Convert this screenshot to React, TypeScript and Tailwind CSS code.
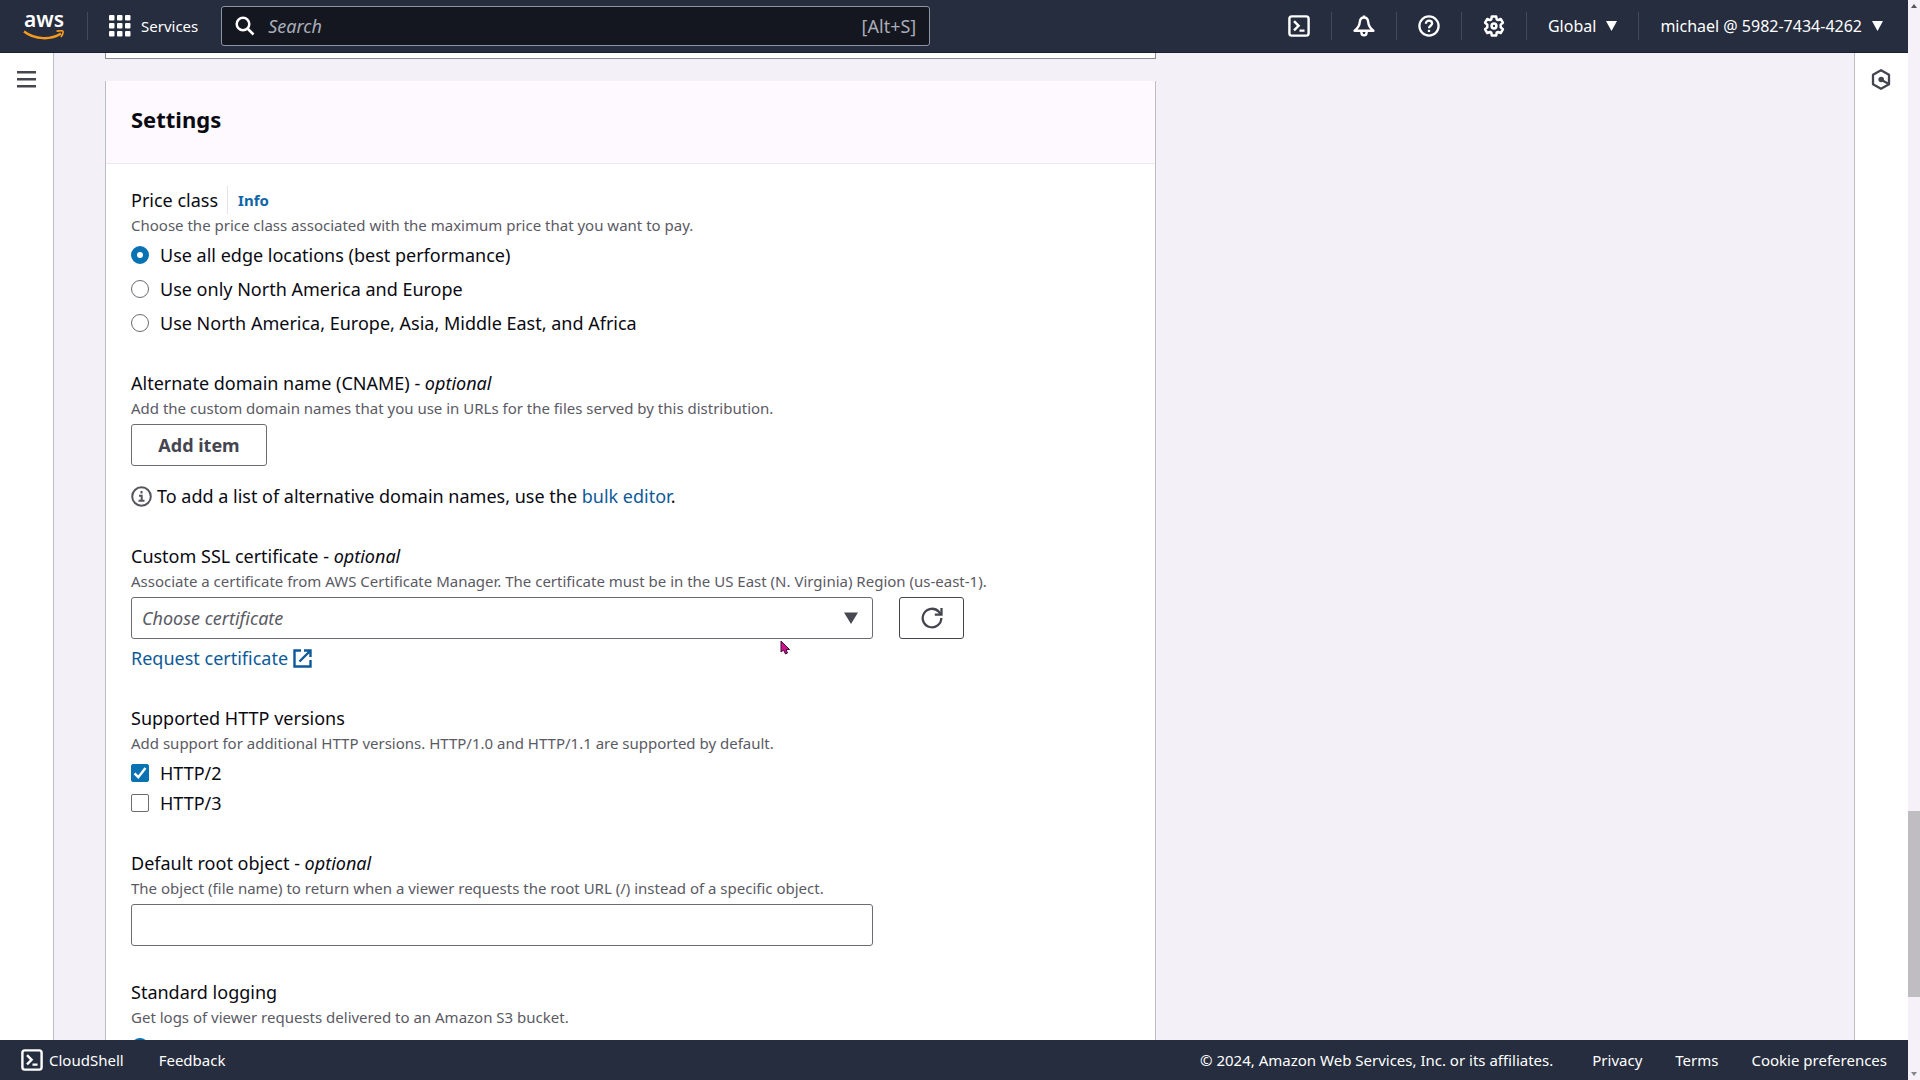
import { ReactNode, useState } from 'react';

interface FieldProps {
    label: string;
    description: string;
    htmlFor?: string;
    optional?: boolean;
    info?: boolean;
    children: ReactNode;
}

const PRICE_CLASSES = [
    'Use all edge locations (best performance)',
    'Use only North America and Europe',
    'Use North America, Europe, Asia, Middle East, and Africa',
];

const CloudShellIcon = () => (
    <svg width="22" height="22" viewBox="0 0 22 22" fill="none" stroke="currentColor" strokeWidth="2.4">
        <rect x="1.4" y="1.4" width="19.2" height="19.2" rx="2.4" />
        <path d="M6 6.2l4.6 4.6L6 15.4M11.5 15.6h5" />
    </svg>
);

const BellIcon = () => (
    <svg width="22" height="22" viewBox="0 0 22 22" fill="none" stroke="currentColor" strokeWidth="2.400" strokeLinejoin="round">
        <path d="M11 .5v2.500M11 2.500C8.300 2.500 7 4.300 6.800 7c-.3 4-2 6.300-5.200 8.700h18.800C17.200 13.300 15.500 11 15.200 7 15 4.300 13.700 2.500 11 2.500z" />
        <path d="M8.400 16v1.600c0 1.700 1.100 2.800 2.600 2.800s2.600-1.100 2.600-2.800V16" />
    </svg>
);

const HelpIcon = () => (
    <svg width="22" height="22" viewBox="0 0 22 22" fill="none" stroke="currentColor" strokeWidth="2.300">
        <circle cx="11" cy="11" r="9.600" />
        <path d="M7.900 8.700c0-1.900 1.300-3 3.100-3s3.100 1.100 3.100 2.800c0 2.200-3.100 2.300-3.100 4.700" />
        <path d="M11 14.800v2.200" />
    </svg>
);

const GearIcon = () => (
    <svg width="22" height="22" viewBox="0 0 22 22" fill="none" stroke="currentColor" strokeWidth="2.500" strokeLinejoin="round">
        <path d="M8.800 1.500h4.400l.5 2.900 1.300.7 2.700-1.100 2.200 3.700-2.200 1.900v2.800l2.200 1.900-2.200 3.700-2.700-1.100-1.300.7-.5 2.900H8.800l-.5-2.900-1.300-.7L4.300 18l-2.200-3.700 2.200-1.900V9.600L2.100 7.700 4.300 4 7 5.100l1.300-.7z" />
        <circle cx="11" cy="11" r="2.400" />
    </svg>
);

const Caret = () => (
    <svg width="11" height="10" viewBox="0 0 11 10" fill="currentColor">
        <path d="M0 0h11L5.500 10z" />
    </svg>
);

const Divider = () => <span className="h-7 w-px bg-[#414a5a]" />;

function TopBar() {
    return (
        <header className="flex h-[53px] shrink-0 items-center justify-between border-b border-[#1b2030] bg-[#262d3e] pr-[25px] pl-[23px] text-white">
            <div className="flex items-center">
                <a href="#" aria-label="aws" className="flex w-[42px] flex-col items-center">
                    <span className="h-[18px] text-[21px] leading-[14px] font-semibold">aws</span>
                    <svg width="42" height="10" viewBox="0 0 42 10" fill="none" stroke="#f79a1f">
                        <path d="M1 1.500c11 8.500 27 8.600 37 2" strokeWidth="2.400" />
                        <path d="M33.500 1.300c3-.8 5.500-.9 6.300-.1.700.9-.3 3.500-1.900 5.800" strokeWidth="1.700" />
                    </svg>
                </a>
                <span className="ml-[22px] h-7 w-px bg-[#414a5a]" />
                <button className="ml-[21px] flex items-center gap-[10px] text-[15px]">
                    <svg width="22" height="22" viewBox="0 0 22 22" fill="currentColor">
                        {[0, 8, 16].map((y) =>
                            [0, 8, 16].map((x) => <rect key={`${x}-${y}`} x={x} y={y} width="5.500" height="5.500" rx="1" />)
                        )}
                    </svg>
                    Services
                </button>
                <label className="ml-[23px] flex h-10 w-[709px] items-center rounded-[3px] border border-[#8d95a5] bg-[#151720] px-[13px]">
                    <svg width="20" height="20" viewBox="0 0 20 20" fill="none" stroke="currentColor" strokeWidth="2.500">
                        <circle cx="8" cy="8" r="6.300" />
                        <path d="M12.500 12.500L18.500 18.500" />
                    </svg>
                    <input
                        type="text"
                        aria-label="Search"
                        placeholder="Search"
                        className="ml-[13px] min-w-0 flex-1 bg-transparent text-lg outline-none placeholder:text-[#a9adb8] placeholder:italic"
                    />
                    <span className="text-lg text-[#a9adb8]">[Alt+S]</span>
                </label>
            </div>
            <div className="flex items-center gap-[21px] text-base">
                <button aria-label="CloudShell"><CloudShellIcon /></button>
                <Divider />
                <button aria-label="Notifications"><BellIcon /></button>
                <Divider />
                <button aria-label="Help"><HelpIcon /></button>
                <Divider />
                <button aria-label="Settings"><GearIcon /></button>
                <Divider />
                <button className="flex items-center gap-[10px]">Global <Caret /></button>
                <Divider />
                <button className="flex items-center gap-[10px]">michael @ 5982-7434-4262 <Caret /></button>
            </div>
        </header>
    );
}

function Field({ label, description, htmlFor, optional, info, children }: FieldProps) {
    return (
        <div>
            <div className="flex items-center text-lg leading-7">
                <label htmlFor={htmlFor}>
                    {label}
                    {optional && <> - <i>optional</i></>}
                </label>
                {info && (
                    <a href="#" className="ml-[9px] border-l border-[#e4e2ea] pl-[10px] text-[15px] leading-7 font-bold text-[#0e66a8]">Info</a>
                )}
            </div>
            <p className="text-[15px] leading-[22px] text-[#5a5a64]">{description}</p>
            <div className="mt-[5px]">{children}</div>
        </div>
    );
}

function Radio({ name, label, checked, onChange }: { name: string; label: string; checked: boolean; onChange: () => void }) {
    return (
        <label className="flex items-center gap-[11px] text-lg leading-7">
            <input
                type="radio"
                name={name}
                checked={checked}
                onChange={onChange}
                className="size-[18px] appearance-none rounded-full border border-[#6b6b76] bg-white checked:border-[6px] checked:border-[#0972b3]"
            />
            {label}
        </label>
    );
}

function Checkbox({ label, defaultChecked }: { label: string; defaultChecked?: boolean }) {
    return (
        <label className="flex items-center gap-[11px] text-lg leading-7">
            <span className="relative size-[18px]">
                <input
                    type="checkbox"
                    defaultChecked={defaultChecked}
                    className="peer block size-[18px] appearance-none rounded-[2px] border border-[#6b6b76] bg-white checked:border-[#0972b3] checked:bg-[#0972b3]"
                />
                <svg className="pointer-events-none absolute inset-0 hidden peer-checked:block" width="18" height="18" viewBox="0 0 18 18" fill="none" stroke="white" strokeWidth="2.500">
                    <path d="M3.500 9.300l3.800 3.900 7.200-9.200" />
                </svg>
            </span>
            {label}
        </label>
    );
}

function SettingsCard() {
    const [priceClass, setPriceClass] = useState(0);
    const [logging, setLogging] = useState('Off');

    return (
        <section className="border-x border-[#bebdc6] bg-white">
            <div className="border-b border-[#ebe8ef] bg-[#fdf9ff] px-[25px] pt-[22px] pb-7">
                <h2 className="text-[22px] leading-8 font-bold">Settings</h2>
            </div>
            <div className="flex flex-col gap-8 px-[25px] pt-[22px] pb-6">
                <Field label="Price class" description="Choose the price class associated with the maximum price that you want to pay." info>
                    <div className="flex flex-col gap-[6px]">
                        {PRICE_CLASSES.map((text, i) => (
                            <Radio key={text} name="price" label={text} checked={priceClass === i} onChange={() => setPriceClass(i)} />
                        ))}
                    </div>
                </Field>

                <Field label="Alternate domain name (CNAME)" description="Add the custom domain names that you use in URLs for the files served by this distribution." optional>
                    <button className="h-[42px] w-[136px] rounded-[3px] border border-[#6b6b76] text-lg font-bold text-[#45454f]">Add item</button>
                    <p className="mt-4 flex items-center text-lg leading-7">
                        <svg className="mr-[5px]" width="21" height="21" viewBox="0 0 21 21" fill="none" stroke="#55555f" strokeWidth="2">
                            <circle cx="10.500" cy="10.500" r="9.300" />
                            <path d="M10.500 5v2.500M8 9.700h2.700v5M7.500 14.800h6" />
                        </svg>
                        <span>To add a list of alternative domain names, use the <a href="#" className="text-[#0e5a98]">bulk editor</a>.</span>
                    </p>
                </Field>

                <Field
                    label="Custom SSL certificate"
                    description="Associate a certificate from AWS Certificate Manager. The certificate must be in the US East (N. Virginia) Region (us-east-1)."
                    htmlFor="certificate"
                    optional
                >
                    <div className="flex gap-[26px]">
                        <div className="relative w-full max-w-[742px]">
                            <select id="certificate" className="h-[42px] w-full appearance-none rounded-[3px] border border-[#6b6b76] bg-white px-[10px] text-lg text-[#5a5a64] italic">
                                <option>Choose certificate</option>
                            </select>
                            <svg className="pointer-events-none absolute top-[15px] right-[15px]" width="14" height="12" viewBox="0 0 14 12" fill="#484852">
                                <path d="M0 .5h14L7 12z" />
                            </svg>
                            {/* mouse pointer */}
                            <svg className="pointer-events-none absolute top-[43px] right-[82px]" width="11" height="15" viewBox="0 0 11 15">
                                <path d="M1 1v11l2.500-2 2 4 2-1-1.500-3.500h3.500z" fill="#d0108c" stroke="#3a1038" strokeWidth="1" />
                            </svg>
                        </div>
                        <button aria-label="Refresh certificates" className="flex h-[42px] w-[65px] shrink-0 items-center justify-center rounded-[3px] border border-[#45454f]">
                            <svg width="22" height="22" viewBox="0 0 22 22" fill="none" stroke="#45454f" strokeWidth="2.300">
                                <path d="M20.300 11A9.300 9.300 0 1 1 17.800 4.700L20 7.500" />
                                <path d="M20.500 1v6.700h-6.700" />
                            </svg>
                        </button>
                    </div>
                    <a href="#" className="mt-[5px] flex items-center gap-[5px] text-lg leading-7 text-[#0e5a98]">
                        Request certificate
                        <svg width="19" height="19" viewBox="0 0 19 19" fill="none" stroke="currentColor" strokeWidth="2.400">
                            <path d="M8 1.500H1.500v16h16V11M11 1.500h6.500V8M17.500 1.500L6.500 12.500" />
                        </svg>
                    </a>
                </Field>

                <Field label="Supported HTTP versions" description="Add support for additional HTTP versions. HTTP/1.0 and HTTP/1.1 are supported by default.">
                    <div className="flex flex-col gap-[2px]">
                        <Checkbox label="HTTP/2" defaultChecked />
                        <Checkbox label="HTTP/3" />
                    </div>
                </Field>

                <Field
                    label="Default root object"
                    description="The object (file name) to return when a viewer requests the root URL (/) instead of a specific object."
                    htmlFor="root-object"
                    optional
                >
                    <input id="root-object" type="text" className="block h-[42px] w-full max-w-[742px] rounded-[3px] border border-[#6b6b76] px-[10px] text-lg" />
                </Field>

                <Field label="Standard logging" description="Get logs of viewer requests delivered to an Amazon S3 bucket.">
                    <Radio name="logging" label="Off" checked={logging === 'Off'} onChange={() => setLogging('Off')} />
                </Field>
            </div>
        </section>
    );
}

function Footer() {
    return (
        <footer className="flex h-10 shrink-0 items-center justify-between bg-[#262d3e] px-[21px] text-[15px] text-white">
            <div className="flex items-center gap-[35px]">
                <button className="flex items-center gap-[6px]"><CloudShellIcon /> CloudShell</button>
                <a href="#">Feedback</a>
            </div>
            <div className="flex items-center gap-[33px]">
                <span className="mr-[6px]">© 2024, Amazon Web Services, Inc. or its affiliates.</span>
                <a href="#">Privacy</a>
                <a href="#">Terms</a>
                <a href="#">Cookie preferences</a>
            </div>
        </footer>
    );
}

export default function App() {
    return (
        <div className="flex h-screen overflow-hidden bg-[#f3f1f7] font-['Noto_Sans','Open_Sans',sans-serif] text-[#0a0a12]">
            <div className="flex min-w-0 flex-1 flex-col">
                <TopBar />
                <div className="flex min-h-0 flex-1">
                    <aside className="w-[54px] shrink-0 border-r border-[#bebdc6] bg-white pt-[18px] pl-[17px]">
                        <button aria-label="Open navigation" className="block">
                            <svg width="19" height="17" viewBox="0 0 19 17" fill="#45454f">
                                <path d="M0 0h19v2.400H0zM0 7h19v2.400H0zM0 14h19v2.400H0z" />
                            </svg>
                        </button>
                    </aside>

                    <main className="min-w-0 flex-1 overflow-hidden px-[51px]">
                        <div className="flex max-w-[1051px] flex-col gap-[22px]">
                            {/* tail of the section above */}
                            <div className="h-[6px] border-x border-b border-[#8c8b94] bg-white" />
                            <SettingsCard />
                        </div>
                    </main>

                    <aside className="w-[54px] shrink-0 border-l border-[#bebdc6] bg-white pt-4 pl-4">
                        <button aria-label="Open help panel" className="block">
                            <svg width="20" height="21" viewBox="0 0 20 21" fill="none" stroke="#45454f" strokeWidth="2.300">
                                <path d="M10 1.200l8 4.600v9.400l-8 4.600-8-4.600V5.800z" strokeLinejoin="round" />
                                <circle cx="10.200" cy="10.500" r="2.800" fill="#45454f" stroke="none" />
                                <path d="M11 11.300l6 3.200" />
                            </svg>
                        </button>
                    </aside>
                </div>
                <Footer />
            </div>

            {/* page scrollbar */}
            <div className="flex w-3 shrink-0 flex-col items-center bg-[#f6f1f8] py-1">
                <svg width="6" height="4" viewBox="0 0 6 4" fill="#55555f"><path d="M0 4h6L3 0z" /></svg>
                <div className="grow-[32]" />
                <div className="h-[186px] w-full bg-[#c0bdc2]" />
                <div className="grow-[3]" />
                <svg width="6" height="4" viewBox="0 0 6 4" fill="#86858e"><path d="M0 0h6L3 4z" /></svg>
            </div>
        </div>
    );
}
